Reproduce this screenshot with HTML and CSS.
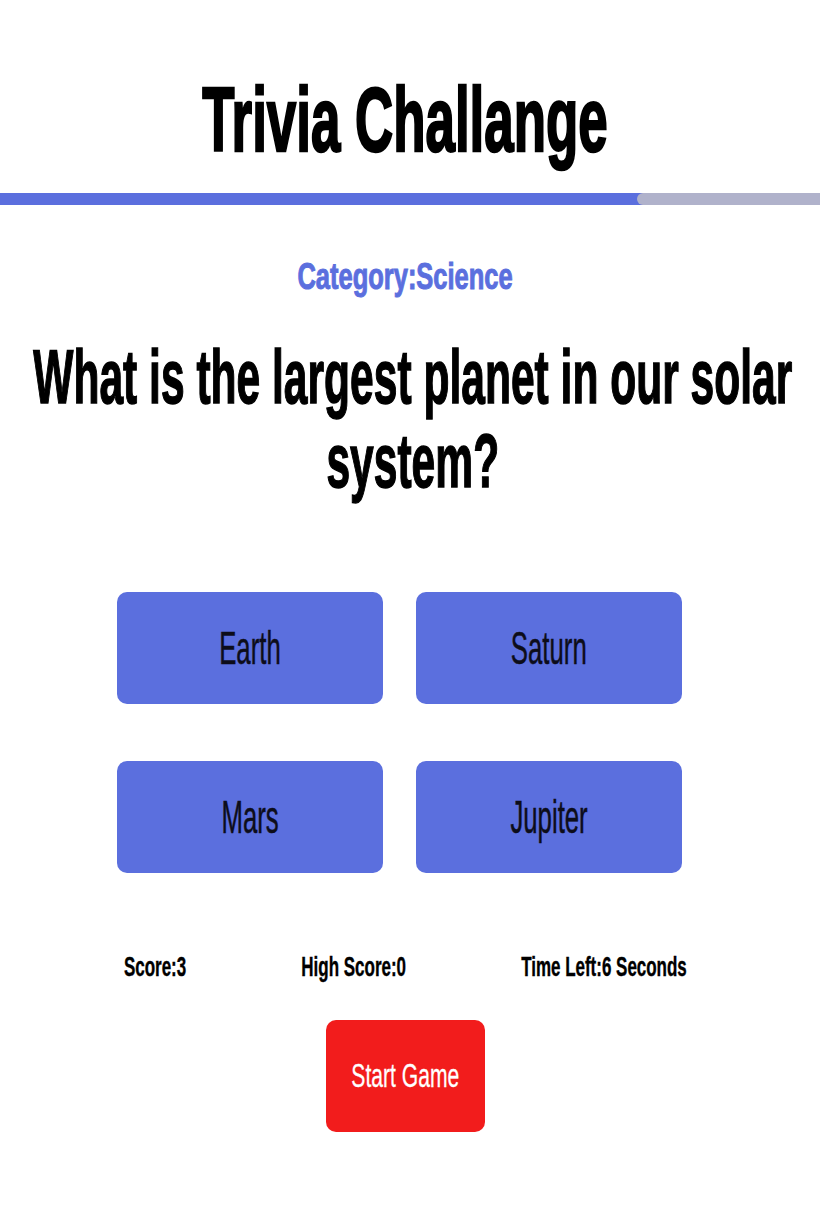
FILE: index.html
```html
<!DOCTYPE html>
<html lang="en">
<head>
<meta charset="utf-8">
<title>Trivia Challange</title>
<link rel="stylesheet" href="styles.css">
</head>
<body>
<main class="page">
  <h1 class="title"><span class="title-text">Trivia Challange</span></h1>
  <div class="progress"><div class="progress-rest" style="width:22.3%"></div></div>
  <p class="category"><span class="category-text">Category:Science</span></p>
  <h2 class="question"><span class="question-text">What is the largest planet in our solar<br>system?</span></h2>
  <div class="answers">
    <button class="answer"><span class="answer-text">Earth</span></button>
    <button class="answer"><span class="answer-text">Saturn</span></button>
    <button class="answer"><span class="answer-text">Mars</span></button>
    <button class="answer"><span class="answer-text">Jupiter</span></button>
  </div>
  <div class="stats">
    <div class="stats-row">
      <span class="stat">Score:3</span>
      <span class="stat">High Score:0</span>
      <span class="stat">Time Left:6 Seconds</span>
    </div>
  </div>
  <div class="start-wrap">
    <button class="start"><span class="start-text">Start Game</span></button>
  </div>
</main>
</body>
</html>
```
FILE: styles.css
```css
html, body {
  margin: 0;
  padding: 0;
  background: #ffffff;
}

body {
  font-family: "Liberation Sans", Arial, sans-serif;
  color: #000000;
  overflow-x: hidden;
}

.page {
  display: block;
}

.title {
  display: flex;
  justify-content: center;
  margin: 0;
  padding: 67px 10px 0 0;
  font-size: 91px;
  font-weight: 700;
  line-height: 106px;
}

.title-text {
  display: inline-block;
  flex-shrink: 0;
  white-space: nowrap;
  -webkit-text-stroke: 2.5px #000000;
  transform: scaleX(0.581);
}

.progress {
  display: flex;
  justify-content: flex-end;
  margin-top: 20px;
  height: 12px;
  background: #5b6fde;
}

.progress-rest {
  height: 100%;
  background: #b0b2cb;
  border-radius: 6px 0 0 6px;
}

.category {
  display: flex;
  justify-content: center;
  margin: 52px 0 0 0;
  padding-right: 10px;
  font-size: 36px;
  font-weight: 700;
  line-height: 40px;
  color: #5b6fde;
}

.category-text {
  display: inline-block;
  flex-shrink: 0;
  white-space: nowrap;
  -webkit-text-stroke: 1px #5b6fde;
  transform: scaleX(0.708);
}

.question {
  display: flex;
  justify-content: center;
  margin: 38px 0 0 0;
  padding-left: 6px;
  font-size: 76px;
  font-weight: 700;
  line-height: 84px;
}

.question-text {
  display: inline-block;
  flex-shrink: 0;
  white-space: nowrap;
  text-align: center;
  -webkit-text-stroke: 1.5px #000000;
  transform: scaleX(0.56);
}

.answers {
  display: grid;
  grid-template-columns: 266px 266px;
  grid-auto-rows: 112px;
  column-gap: 33px;
  row-gap: 57px;
  margin: 89px 0 0 117px;
}

.answer {
  display: flex;
  align-items: center;
  justify-content: center;
  border: none;
  padding: 0;
  margin: 0;
  border-radius: 10px;
  background: #5b6fde;
  font-family: "Liberation Sans", Arial, sans-serif;
  font-size: 46px;
  font-weight: 400;
  color: #0d0d1a;
  cursor: pointer;
}

.answer-text {
  display: inline-block;
  white-space: nowrap;
  -webkit-text-stroke: 0.5px #0d0d1a;
  transform: scaleX(0.56);
}

.stats {
  display: flex;
  justify-content: center;
  margin-top: 78px;
  padding-right: 10px;
  font-size: 28px;
  font-weight: 700;
  line-height: 32px;
}

.stats-row {
  display: flex;
  flex-shrink: 0;
  gap: 190px;
  white-space: nowrap;
  -webkit-text-stroke: 0.4px #000000;
  transform: scaleX(0.606);
}

.start-wrap {
  display: flex;
  justify-content: center;
  margin-top: 37px;
  padding-right: 9px;
}

.start {
  display: flex;
  align-items: center;
  justify-content: center;
  width: 159px;
  height: 112px;
  border: none;
  padding: 0;
  border-radius: 10px;
  background: #f21c1c;
  font-family: "Liberation Sans", Arial, sans-serif;
  font-size: 33px;
  font-weight: 400;
  color: #ffffff;
  cursor: pointer;
}

.start-text {
  display: inline-block;
  white-space: nowrap;
  -webkit-text-stroke: 0.3px #ffffff;
  transform: scaleX(0.64);
}
```
